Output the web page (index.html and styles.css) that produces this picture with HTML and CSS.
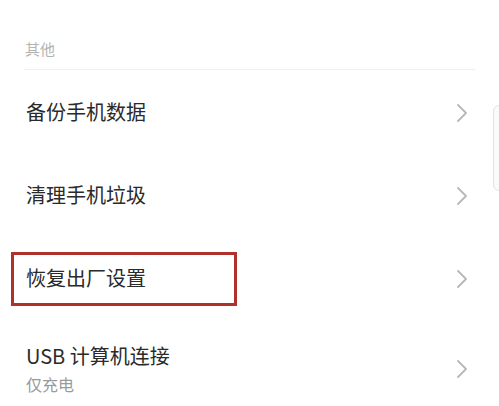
FILE: index.html
```html
<!DOCTYPE html>
<html lang="zh">
<head>
<meta charset="utf-8">
<link rel="stylesheet" href="styles.css">
</head>
<body>
<div class="page">
  <div class="section-title">其他</div>
  <div class="row">
    <div class="label">备份手机数据</div>
    <svg class="chev" width="10" height="18" viewBox="0 0 10 18"><path d="M1 1 L9 9 L1 17" /></svg>
  </div>
  <div class="row">
    <div class="label">清理手机垃圾</div>
    <svg class="chev" width="10" height="18" viewBox="0 0 10 18"><path d="M1 1 L9 9 L1 17" /></svg>
  </div>
  <div class="row highlight">
    <div class="label">恢复出厂设置</div>
    <svg class="chev" width="10" height="18" viewBox="0 0 10 18"><path d="M1 1 L9 9 L1 17" /></svg>
    <div class="mark"></div>
  </div>
  <div class="row tall">
    <div class="text">
      <div class="label">USB 计算机连接</div>
      <div class="sub">仅充电</div>
    </div>
    <svg class="chev" width="10" height="18" viewBox="0 0 10 18"><path d="M1 1 L9 9 L1 17" /></svg>
  </div>
  <div class="edge"></div>
</div>
</body>
</html>
```

FILE: styles.css
```css
html, body {
  margin: 0;
  padding: 0;
  background: #ffffff;
}
body {
  font-family: "Noto Sans CJK SC", "Noto Sans", sans-serif;
  color: #2a2a2a;
}
.page {
  position: relative;
  width: 499px;
  height: 406px;
  overflow: hidden;
}
.section-title {
  margin: 0 24px;
  padding: 39px 0 10px 1px;
  font-size: 15px;
  line-height: 20px;
  color: #b4b4b4;
  border-bottom: 1px solid #efefef;
}
.row {
  position: relative;
  display: flex;
  align-items: center;
  justify-content: space-between;
  height: 83px;
  padding: 0 32px 0 26px;
}
.label {
  font-size: 20px;
  line-height: 28px;
  color: #2a2a2a;
}
.sub {
  font-size: 16px;
  line-height: 20px;
  color: #9a9a9a;
  margin-top: 4px;
}
.tall {
  height: auto;
  padding-top: 23px;
  padding-bottom: 10px;
}
.chev {
  flex: none;
  margin-top: 2px;
}
.chev path {
  fill: none;
  stroke: #b8b8b8;
  stroke-width: 1.8;
  stroke-linecap: round;
  stroke-linejoin: round;
}
.mark {
  position: absolute;
  left: 11px;
  top: 16px;
  width: 220px;
  height: 48px;
  border: 3px solid #b0302a;
}
.edge {
  position: absolute;
  left: 493px;
  top: 105px;
  width: 20px;
  height: 84px;
  border: 1px solid #e2e2e2;
  border-radius: 6px;
  background: #fafafa;
}
```
